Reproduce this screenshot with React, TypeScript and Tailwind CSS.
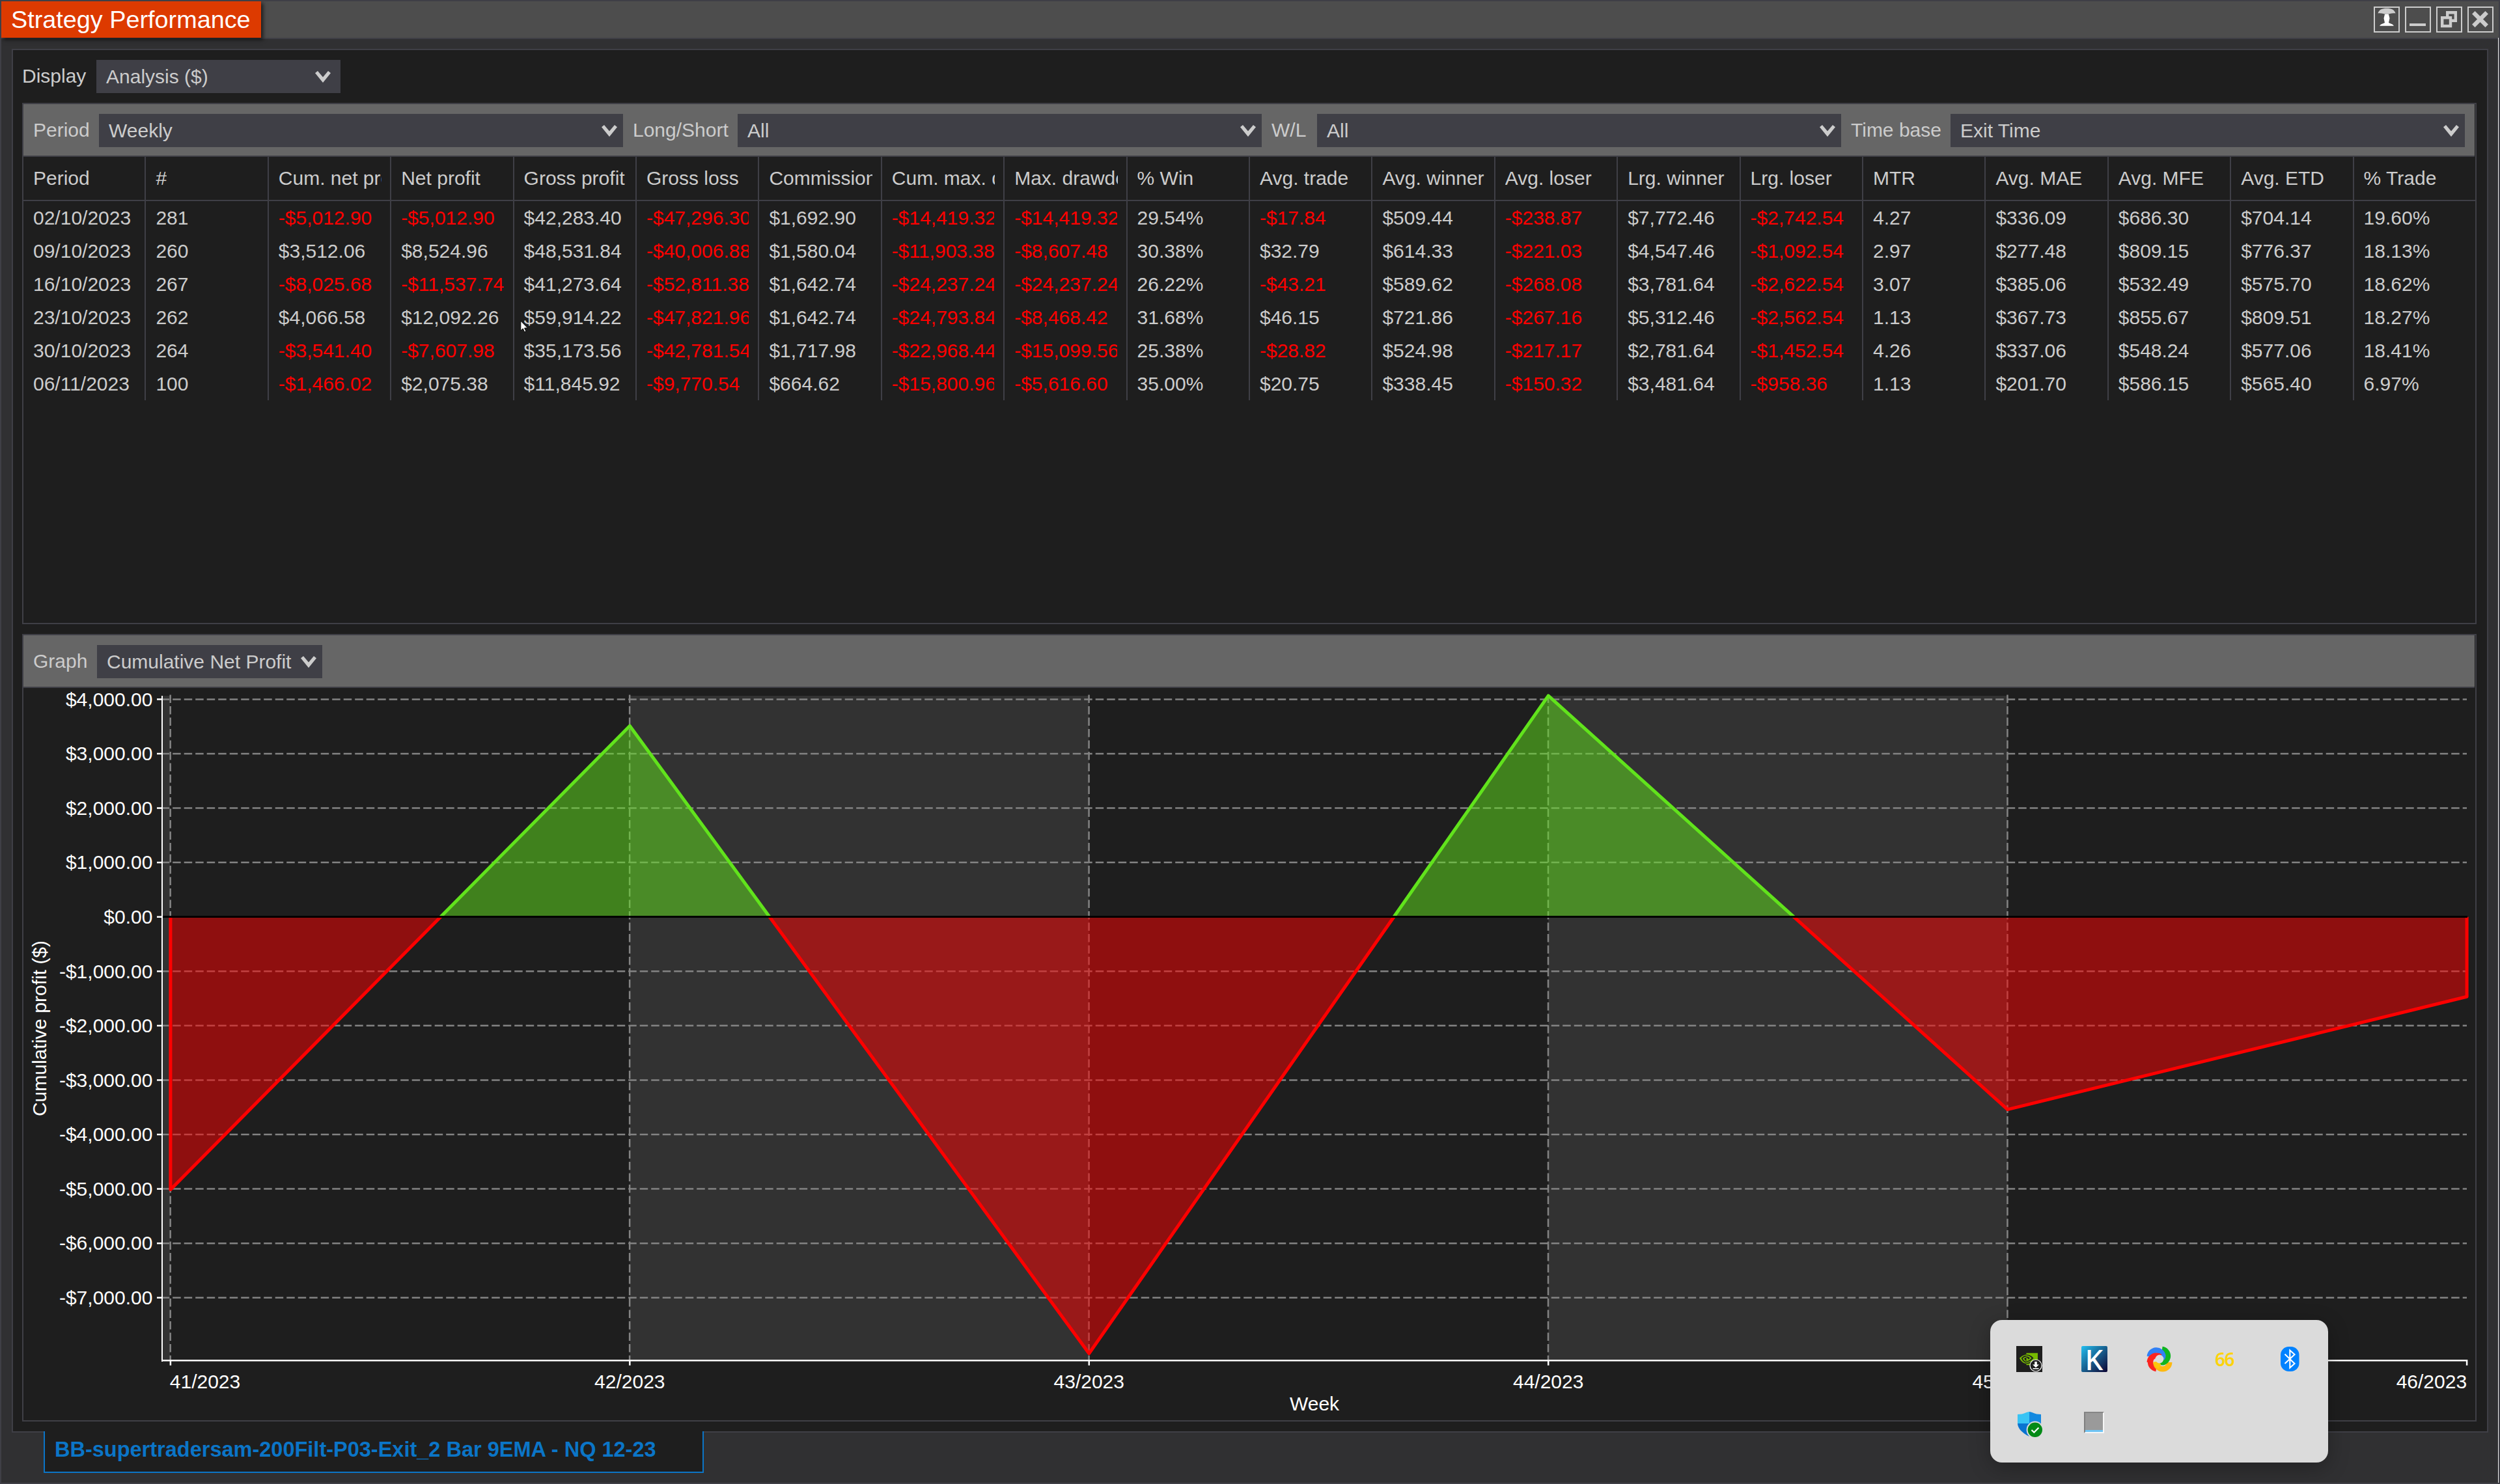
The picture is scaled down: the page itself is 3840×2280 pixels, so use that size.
import React from "react";
import { SiNvidia } from "react-icons/si";

const COLUMNS = [
  "Period", "#", "Cum. net profit", "Net profit", "Gross profit", "Gross loss", "Commission",
  "Cum. max. drawdown", "Max. drawdown", "% Win", "Avg. trade", "Avg. winner", "Avg. loser",
  "Lrg. winner", "Lrg. loser", "MTR", "Avg. MAE", "Avg. MFE", "Avg. ETD", "% Trade",
];

const ROWS = [
  ["02/10/2023", "281", "-$5,012.90", "-$5,012.90", "$42,283.40", "-$47,296.30", "$1,692.90", "-$14,419.32", "-$14,419.32", "29.54%", "-$17.84", "$509.44", "-$238.87", "$7,772.46", "-$2,742.54", "4.27", "$336.09", "$686.30", "$704.14", "19.60%"],
  ["09/10/2023", "260", "$3,512.06", "$8,524.96", "$48,531.84", "-$40,006.88", "$1,580.04", "-$11,903.38", "-$8,607.48", "30.38%", "$32.79", "$614.33", "-$221.03", "$4,547.46", "-$1,092.54", "2.97", "$277.48", "$809.15", "$776.37", "18.13%"],
  ["16/10/2023", "267", "-$8,025.68", "-$11,537.74", "$41,273.64", "-$52,811.38", "$1,642.74", "-$24,237.24", "-$24,237.24", "26.22%", "-$43.21", "$589.62", "-$268.08", "$3,781.64", "-$2,622.54", "3.07", "$385.06", "$532.49", "$575.70", "18.62%"],
  ["23/10/2023", "262", "$4,066.58", "$12,092.26", "$59,914.22", "-$47,821.96", "$1,642.74", "-$24,793.84", "-$8,468.42", "31.68%", "$46.15", "$721.86", "-$267.16", "$5,312.46", "-$2,562.54", "1.13", "$367.73", "$855.67", "$809.51", "18.27%"],
  ["30/10/2023", "264", "-$3,541.40", "-$7,607.98", "$35,173.56", "-$42,781.54", "$1,717.98", "-$22,968.44", "-$15,099.56", "25.38%", "-$28.82", "$524.98", "-$217.17", "$2,781.64", "-$1,452.54", "4.26", "$337.06", "$548.24", "$577.06", "18.41%"],
  ["06/11/2023", "100", "-$1,466.02", "$2,075.38", "$11,845.92", "-$9,770.54", "$664.62", "-$15,800.96", "-$5,616.60", "35.00%", "$20.75", "$338.45", "-$150.32", "$3,481.64", "-$958.36", "1.13", "$201.70", "$586.15", "$565.40", "6.97%"],
];

function Select({ value, className, chevron = "pr-[9px]" }: { value: string; className: string; chevron?: string }) {
  return (
    <div className={`flex h-[51px] shrink-0 items-center justify-between bg-[#3f3f46] pl-[15px] ${chevron} ${className}`}>
      <span className="whitespace-nowrap">{value}</span>
      <svg width="24" height="18" viewBox="0 0 24 18" fill="#cccccc">
        <path d="M0 3.2L4 0L12 9.6L20 0L24 3.2L12 18Z" />
      </svg>
    </div>
  );
}

function WindowButton({ children }: { children: React.ReactNode }) {
  return (
    <div className="h-10 w-10 border-2 border-[#cccccc]">
      <svg width="36" height="36" viewBox="2 2 36 36">{children}</svg>
    </div>
  );
}

function TitleBar() {
  return (
    <div className="flex h-[58px] items-start justify-between border-b-2 border-[#3f3f46] bg-[#4d4d4d]">
      <div className="flex h-14 w-[399px] items-center bg-[#dd3a00] pl-[15px] text-[37.8px] whitespace-nowrap text-white shadow-[3px_3px_6px_rgba(0,0,0,0.65)]">
        Strategy Performance
      </div>
      <div className="flex gap-2 pt-2 pr-2">
        <WindowButton>
          <path d="M6.5 10.5C8 5 13 2.8 20 2.8S32 5 33.5 10.5C28 9.6 24 12 20 12S12 9.6 6.5 10.5Z" fill="#cccccc" />
          <path d="M17 12H23L24.5 18L23 25L29 27.5L31 29.7H9L11 27.5L17 25L15.5 18Z" fill="#ffffff" />
        </WindowButton>
        <WindowButton>
          <rect x="7" y="26" width="25" height="4" fill="#cccccc" />
        </WindowButton>
        <WindowButton>
          <path d="M17.2 15V9.2H29.8V21.8H24" fill="none" stroke="#cccccc" strokeWidth="4.4" />
          <rect x="9.2" y="17.2" width="12.8" height="12.8" fill="#4d4d4d" stroke="#cccccc" strokeWidth="4.4" />
        </WindowButton>
        <WindowButton>
          <path d="M9.3 9.3L29.7 29.7M29.7 9.3L9.3 29.7" stroke="#cccccc" strokeWidth="6.4" />
        </WindowButton>
      </div>
    </div>
  );
}

function AnalysisTable() {
  return (
    <div className="ml-[14px] mt-[15px] h-[801px] w-[3770px] overflow-hidden border-2 border-[#3f3f46]">
      <div className="flex h-[81px] w-[3765px] items-center border-b-2 border-[#3f3f46] bg-[#666666] pl-[15px]">
        <span className="w-[101px] shrink-0">Period</span>
        <Select value="Weekly" className="mt-[2px] w-[805px]" />
        <span className="ml-[15px] w-[161px] shrink-0">Long/Short</span>
        <Select value="All" className="mt-[2px] w-[805px]" />
        <span className="ml-[15px] w-[70px] shrink-0">W/L</span>
        <Select value="All" className="mt-[2px] w-[805px]" />
        <span className="ml-[15px] w-[153px] shrink-0">Time base</span>
        <Select value="Exit Time" className="mt-[2px] w-[790px]" />
      </div>
      <div className="grid h-[68px] w-[3768px] grid-cols-20 border-b-2 border-[#3f3f46]">
        {COLUMNS.map((label) => (
          <div key={label} className="flex min-w-0 items-center border-r-2 border-[#3f3f46] pr-[13px] pl-[15px] last:border-r-0">
            <span className="min-w-0 overflow-hidden whitespace-nowrap">{label}</span>
          </div>
        ))}
      </div>
      {ROWS.map((row) => (
        <div key={row[0]} className="grid h-[51px] w-[3768px] grid-cols-20">
          {row.map((cell, i) => (
            <div key={i} className="flex min-w-0 items-center border-r-2 border-[#3f3f46] pr-[14px] pl-[15px] last:border-r-0">
              <span className={`min-w-0 overflow-hidden whitespace-nowrap ${cell.startsWith("-") ? "text-[#ff0000]" : ""}`}>{cell}</span>
            </div>
          ))}
        </div>
      ))}
    </div>
  );
}

const WEEKS = [
  { label: "41/2023", value: -5012.9 },
  { label: "42/2023", value: 3512.06 },
  { label: "43/2023", value: -8025.68 },
  { label: "44/2023", value: 4066.58 },
  { label: "45/2023", value: -3541.4 },
  { label: "46/2023", value: -1466.02 },
];

// Chart space: the svg's top-left corner is at (36, 1057) of the window.
const px = (i: number) => 261.9 + i * 705.44;
const py = (v: number) => 1408.7 - v * 0.08358;

function crossing(i: number) {
  const a = WEEKS[i].value;
  const b = WEEKS[i + 1].value;
  return px(i + a / (a - b));
}

function money(v: number) {
  return `${v < 0 ? "-" : ""}$${Math.abs(v).toLocaleString("en-US", { minimumFractionDigits: 2 })}`;
}

function ProfitChart() {
  const zero = py(0);
  const pt = (i: number) => `${px(i)},${py(WEEKS[i].value)}`;
  const z = (x: number) => `${x},${zero}`;
  const [c0, c1, c2, c3] = [0, 1, 2, 3].map(crossing);
  const losses = [
    [z(px(0)), pt(0), z(c0)],
    [z(c1), pt(2), z(c2)],
    [z(c3), pt(4), pt(5), z(px(5))],
  ];
  const wins = [
    [z(c0), pt(1), z(c1)],
    [z(c2), pt(3), z(c3)],
  ];
  const ticks = [4, 3, 2, 1, 0, -1, -2, -3, -4, -5, -6, -7].map((k) => k * 1000);
  return (
    <svg width="3766" height="1125" viewBox="36 1057 3766 1125" className="block text-[30px]">
      <rect x="250" y="1069" width="11" height="1020" fill="#323232" />
      <rect x={px(1)} y="1069" width="705.4" height="1020" fill="#323232" />
      <rect x={px(3)} y="1069" width="705.4" height="1020" fill="#323232" />
      {ticks.map((v) => (
        <line key={v} x1="247.7" x2="3789" y1={py(v)} y2={py(v)} stroke="#838383" strokeWidth="2.5" strokeDasharray="12.5 5" />
      ))}
      {[0, 1, 2, 3, 4].map((i) => (
        <line key={i} x1={px(i) - 0.2} x2={px(i) - 0.2} y1="1067.5" y2="2089" stroke="#838383" strokeWidth="2.5" strokeDasharray="12.5 5" />
      ))}
      {losses.map((p, i) => (
        <g key={i}>
          <polygon points={p.join(" ")} fill="#ff0000" fillOpacity="0.5" />
          <polyline points={p.join(" ")} fill="none" stroke="#ff0000" strokeWidth="5" strokeLinejoin="round" />
        </g>
      ))}
      {wins.map((p, i) => (
        <g key={i}>
          <polygon points={p.join(" ")} fill="#61e31c" fillOpacity="0.5" />
          <polyline points={p.join(" ")} fill="none" stroke="#61e31c" strokeWidth="5" strokeLinejoin="round" />
        </g>
      ))}
      <rect x="250" y="1407" width="3540" height="3" fill="#000000" />
      <rect x="248" y="1069" width="2" height="1023" fill="#ffffff" />
      <rect x="248" y="2089" width="3541" height="2.5" fill="#ffffff" />
      {ticks.map((v) => (
        <g key={v} fill="#ffffff">
          <rect x="241" y={py(v) - 1.25} width="8" height="2.5" />
          <text x="234.4" y={py(v) + 10.3} textAnchor="end">{money(v)}</text>
        </g>
      ))}
      {WEEKS.map((w, i) => (
        <g key={w.label} fill="#ffffff">
          <rect x={px(i) - 1.25} y="2089" width="2.5" height="8.8" />
          <text x={i === 0 ? 260.8 : px(i)} y="2133" textAnchor={i === 0 ? "start" : i === 5 ? "end" : "middle"}>{w.label}</text>
        </g>
      ))}
      <text x="2019" y="2167" textAnchor="middle" fill="#ffffff">Week</text>
      <text transform="translate(71 1580) rotate(-90)" textAnchor="middle" fill="#ffffff">Cumulative profit ($)</text>
    </svg>
  );
}

function GraphPanel() {
  return (
    <div className="ml-[14px] mt-[15px] h-[1210px] w-[3770px] border-2 border-[#3f3f46]">
      <div className="flex h-[81px] w-[3765px] items-center border-b-2 border-[#3f3f46] bg-[#666666] pl-[15px]">
        <span className="w-[98px] shrink-0">Graph</span>
        <Select value="Cumulative Net Profit" className="mt-[2px] w-[346px]" />
      </div>
      <ProfitChart />
    </div>
  );
}

function NvidiaIcon() {
  return (
    <div className="relative h-10 w-10 bg-[#1e1e1e]">
      <SiNvidia className="absolute top-[6px] left-[5px] h-[28px] w-[28px] text-[#76b900]" />
      <svg width="20" height="20" viewBox="0 0 20 20" className="absolute right-0 bottom-0">
        <circle cx="10" cy="10" r="9" fill="#1e1e1e" stroke="#ffffff" strokeWidth="1.2" />
        <path d="M8.2 4H11.8V8.5H15L10 13.2L5 8.5H8.2ZM5.5 14H14.5V15.4H5.5Z" fill="#ffffff" />
      </svg>
    </div>
  );
}

function SwirlIcon() {
  return (
    <svg width="40" height="40" viewBox="0 0 40 40" fill="none" strokeWidth="8.4">
      <path d="M15 35A10.4 10.4 0 0 1 15 14.4" stroke="#fb2420" />
      <path d="M35.2 25A10.4 10.4 0 0 1 14.4 25" stroke="#fdb910" />
      <path d="M24 5A10.4 10.4 0 0 1 25 25.4C22 25.4 19.5 24.6 17.5 22.6" stroke="#0fb520" />
      <path d="M4.8 16A10.4 10.4 0 0 1 25.4 15C25.4 16.6 25 18 24.2 19.2" stroke="#3180f5" />
      <path d="M4.8 25A10.4 10.4 0 0 1 15 14.6C17.6 14.6 19.4 15 21 16.2" stroke="#fb2420" />
      <path d="M20.5 31.5A10.4 10.4 0 0 1 14.6 24" stroke="#fdc60c" />
      <circle cx="20" cy="20" r="6.4" fill="#dbdbdb" stroke="none" />
    </svg>
  );
}

function BluetoothIcon() {
  return (
    <svg width="40" height="40" viewBox="0 0 40 40" fill="none">
      <rect x="6" y="1" width="28.5" height="38" rx="12.5" fill="#0082ff" />
      <path d="M12.5 12.5L27.5 27L20.3 33.5V6.5L27.5 13L12.5 27" stroke="#ffffff" strokeWidth="2.1" />
    </svg>
  );
}

function ShieldIcon() {
  return (
    <svg width="40" height="40" viewBox="0 0 40 40">
      <path d="M20 1C15 1 13 5 2 5V19H20Z" fill="#39c4f4" />
      <path d="M20 1C25 1 27 5 38 5V19H20Z" fill="#1489e0" />
      <path d="M2 19H20V39C9 33.5 2.5 27 2 19Z" fill="#0a74d0" />
      <path d="M38 19H20V39C31 33.5 37.5 27 38 19Z" fill="#0b52a8" />
      <circle cx="28.8" cy="28.8" r="13.2" fill="#dbdbdb" />
      <circle cx="28.8" cy="28.8" r="11.2" fill="#038a16" />
      <path d="M23.5 29L27.3 32.8L34.4 25.4" fill="none" stroke="#ffffff" strokeWidth="2.2" />
    </svg>
  );
}

function TrayPopup() {
  const cell = "flex items-center justify-center";
  return (
    <div className="absolute top-[2026px] left-[3055px] flex h-[219px] w-[519px] items-center justify-center rounded-[18px] bg-[#dbdbdb] shadow-[0_8px_32px_rgba(0,0,0,0.28)]">
      <div className="grid h-[200px] w-[500px] grid-cols-5 grid-rows-2">
        <div className={cell}><NvidiaIcon /></div>
        <div className={cell}>
          <div className="flex h-10 w-10 items-center justify-center overflow-hidden rounded-[2px] bg-linear-135 from-[#22c0f2] via-[#17608f] to-[#0b0433] font-['Noto_Sans',sans-serif] text-[44px] leading-none font-medium text-white">
            K
          </div>
        </div>
        <div className={cell}><SwirlIcon /></div>
        <div className={`${cell} font-['Noto_Sans',sans-serif] text-[28px] font-semibold tracking-[-1.5px] text-[#fbd30c]`}>66</div>
        <div className={cell}><BluetoothIcon /></div>
        <div className={cell}><ShieldIcon /></div>
        <div className={cell}>
          <div className="mt-[-4px] flex h-[33px] w-[31px] items-end border-t-2 border-r-2 border-b-2 border-l-2 border-t-[#868686] border-r-[#f6f6f6] border-b-[#f3f6f8] border-l-[#808080] bg-[#9a9a9a]">
            <div className="h-[3px] w-full bg-[#6ec4f4]" />
          </div>
        </div>
      </div>
    </div>
  );
}

export default function App() {
  return (
    <div className="relative flex h-[2280px] w-[3840px] flex-col overflow-hidden border-2 border-[#3f3f46] bg-[#303032] font-['Liberation_Sans',Arial,sans-serif] text-[30px] leading-[34px] text-[#cccccc]">
      <TitleBar />
      <div className="mt-[15px] ml-4 h-[2126px] w-[3804px] shrink-0 border-2 border-[#3f3f46] bg-[#1e1e1e]">
        <div className="flex h-[66px] items-center pt-[15px] pl-[14px]">
          <span className="w-[114px] shrink-0 pb-[2px]">Display</span>
          <Select value="Analysis ($)" className="w-[375px]" chevron="pr-[15px]" />
        </div>
        <AnalysisTable />
        <GraphPanel />
      </div>
      <div className="relative -mt-[2px] ml-[65px] flex h-16 w-[1014px] shrink-0 items-center border-2 border-t-0 border-[#0b75c7] bg-[#1e1e1e] pb-[7px] pl-[15px] text-[32.5px] font-bold whitespace-nowrap text-[#0b75c7]">
        BB-supertradersam-200Filt-P03-Exit_2 Bar 9EMA - NQ 12-23
      </div>
      <div className="absolute top-14 right-0 bottom-0 w-px bg-[#f0f0f0]" />
      <svg width="14" height="20" viewBox="0 0 14 20" className="absolute top-[490px] left-[797px]">
        <path d="M0.8 1V16L4.2 12.8L6.6 18.2L9 17L6.6 12H11.5Z" fill="#ffffff" stroke="#000000" strokeWidth="1" />
      </svg>
      <TrayPopup />
    </div>
  );
}
